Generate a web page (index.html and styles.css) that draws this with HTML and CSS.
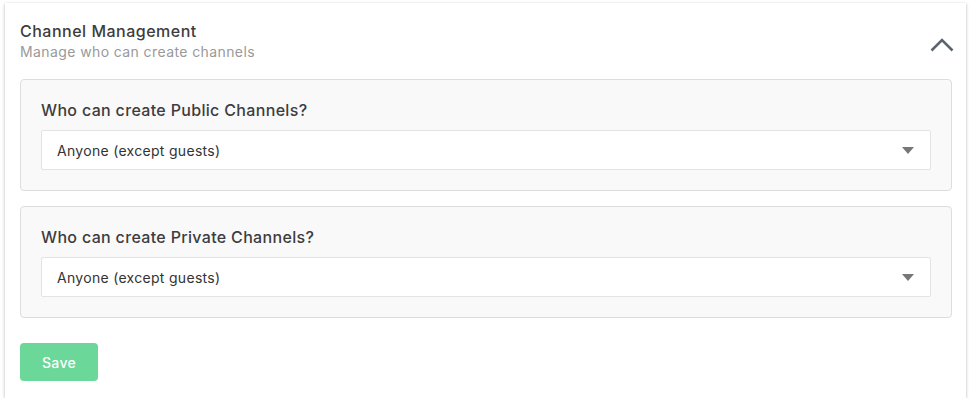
FILE: index.html
```html
<!DOCTYPE html>
<html>
<head>
<meta charset="utf-8">
<link rel="stylesheet" href="styles.css">
</head>
<body>
<div class="card">
  <div class="header">
    <div class="titles">
      <div class="title">Channel Management</div>
      <div class="subtitle">Manage who can create channels</div>
    </div>
    <svg class="chevron" width="24" height="14" viewBox="0 0 24 14"><path d="M1.5 12.5 L12 2 L22.5 12.5" fill="none" stroke="#5a6570" stroke-width="2.6"/></svg>
  </div>
  <div class="section">
    <div class="label">Who can create Public Channels?</div>
    <div class="select"><span>Anyone (except guests)</span><span class="caret"></span></div>
  </div>
  <div class="section">
    <div class="label">Who can create Private Channels?</div>
    <div class="select"><span>Anyone (except guests)</span><span class="caret"></span></div>
  </div>
  <button class="save">Save</button>
</div>
</body>
</html>
```
FILE: styles.css
```css
html, body { margin: 0; padding: 0; background: #fff; }
body { font-family: Inter, "Open Sans", "Liberation Sans", sans-serif; }
.card {
  margin: 3px 0 0 5px;
  width: 961px;
  height: 395px;
  box-sizing: border-box;
  padding: 18px 14px 0 15px;
  background: #fff;
  box-shadow: 0 1px 3px rgba(0,0,0,0.3);
}
.header { display: flex; justify-content: space-between; align-items: flex-start; }
.title { font-size: 16px; line-height: 20px; font-weight: 500; color: #3d3c40; letter-spacing: 0.5px; }
.subtitle { font-size: 14px; line-height: 20px; color: #999; margin-top: 1px; letter-spacing: 0.4px; }
.chevron { margin-top: 17px; margin-right: -2px; }
.section {
  margin-top: 17px;
  border: 1px solid #dddddd;
  border-radius: 4px;
  background: #f9f9f9;
  padding: 20px 20px 20px 20px;
}
.section + .section { margin-top: 15px; }
.label { font-size: 16px; line-height: 20px; font-weight: 500; color: #3d3c40; margin-bottom: 10px; letter-spacing: 0.33px; }
.select {
  height: 40px;
  box-sizing: border-box;
  background: #fff;
  border: 1px solid #e3e3e3;
  border-radius: 2px;
  display: flex;
  align-items: center;
  justify-content: space-between;
  padding: 0 16px 0 15px;
  font-size: 14px;
  color: #333;
  letter-spacing: 0.3px;
}
.caret {
  width: 0; height: 0;
  border-left: 6px solid transparent;
  border-right: 6px solid transparent;
  border-top: 7px solid #777;
}
.save {
  display: block;
  margin-top: 25px;
  width: 78px;
  height: 38px;
  border: none;
  border-radius: 4px;
  background: #6bd799;
  color: #fff;
  font-family: inherit;
  font-size: 14px;
  font-weight: 500;
  letter-spacing: 0.3px;
}
```
